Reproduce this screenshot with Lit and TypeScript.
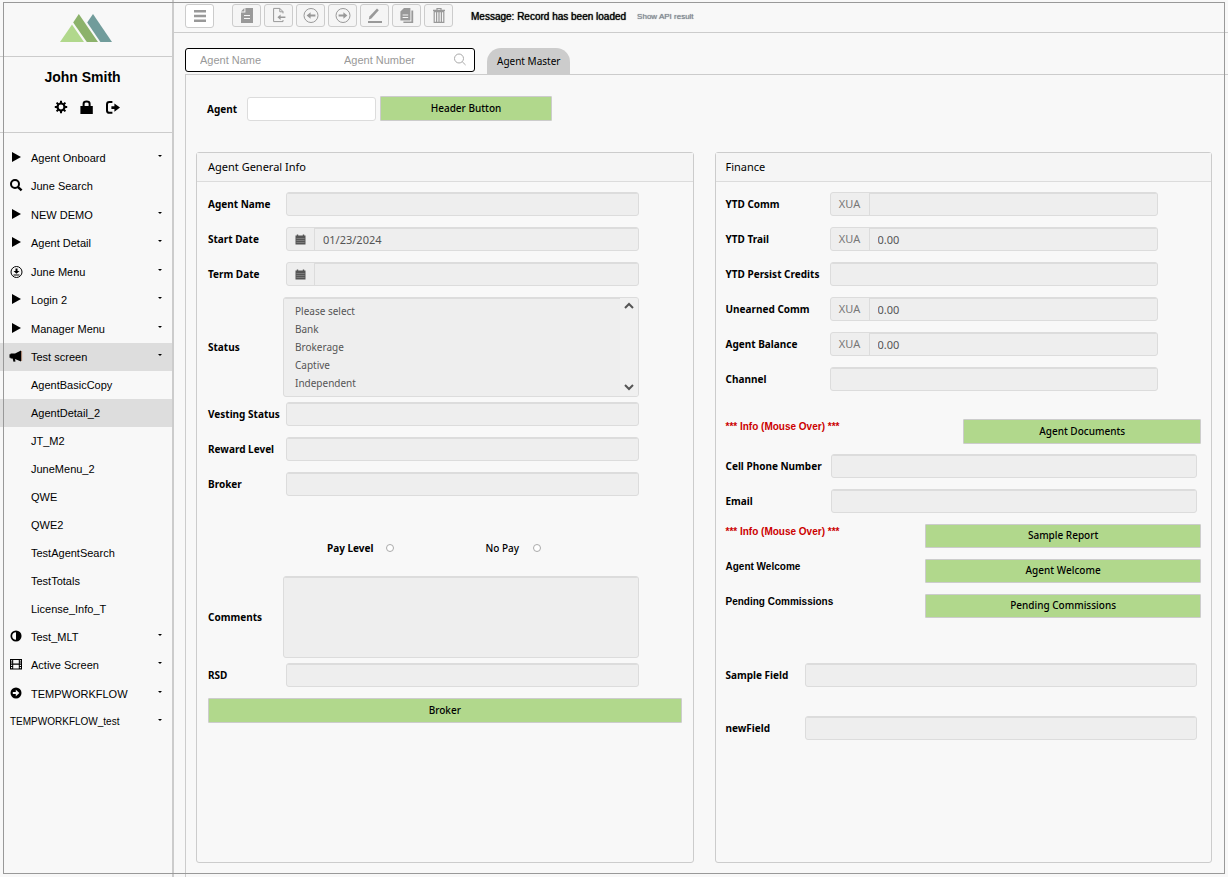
import { LitElement, html, css, svg, nothing } from "lit";
import { customElement, property } from "lit/decorators.js";
import { classMap } from "lit/directives/class-map.js";

/* ---------- icons ---------- */

const glyphs: Record<string, unknown> = {
  play: svg`<path d="M2 2 L11 7 L2 12 Z"/>`,
  search: svg`<circle cx="5" cy="6" r="4" fill="none" stroke="currentColor" stroke-width="2"/><path d="M7.8 8.8 L11.6 12.4" stroke="currentColor" stroke-width="2.4"/>`,
  download: svg`<circle cx="6.5" cy="8" r="5.5" fill="none" stroke="currentColor" stroke-width="1"/><path d="M5.5 4.5 H7.5 V7 H9.5 L6.5 9.8 L3.5 7 H5.5 Z M3.5 10.4 H9.5 V11.4 H3.5 Z"/>`,
  horn: svg`<path d="M11 1.4 V12.4 L5 10 L5.5 12.4 L3.5 12.8 L2.6 9.4 H.6 V8.8 H-.5 V5.2 H.6 V4.6 H5 Z"/><path d="M11.6 2 V12" stroke="#7d3c1c" stroke-width="1" opacity=".6"/>`,
  contrast: svg`<circle cx="6" cy="7" r="4.7" fill="none" stroke="currentColor" stroke-width="1.7"/><path d="M6 2.3 A4.7 4.7 0 0 1 6 11.7 Z"/>`,
  film: svg`<path fill-rule="evenodd" d="M0 2 H12 V12.4 H0 Z M3.2 3 V6.6 H8.8 V3 Z M3.2 7.8 V11.4 H8.8 V7.8 Z M1 3.2 V4.6 H2.2 V3.2 Z M1 5.4 V6.6 H2.2 V5.4 Z M1 7.8 V9 H2.2 V7.8 Z M1 9.9 V11.2 H2.2 V9.9 Z M9.8 3.2 V4.6 H11 V3.2 Z M9.8 5.4 V6.6 H11 V5.4 Z M9.8 7.8 V9 H11 V7.8 Z M9.8 9.9 V11.2 H11 V9.9 Z"/>`,
  arrow: svg`<circle cx="6" cy="7" r="5.5"/><path d="M2.8 6.1 H5.8 V3.8 L9.4 7 L5.8 10.2 V7.9 H2.8 Z" fill="#f8f8f8"/>`,
  gear: svg`<circle cx="7" cy="7" r="3.5" fill="none" stroke="currentColor" stroke-width="2.2"/><path d="M7 .8 V3 M7 11 V13.2 M.8 7 H3 M11 7 H13.2 M2.6 2.6 L4.2 4.2 M9.8 9.8 L11.4 11.4 M2.6 11.4 L4.2 9.8 M9.8 4.2 L11.4 2.6" stroke="currentColor" stroke-width="2"/>`,
  lock: svg`<path d="M.4 6 H12.8 V14 H.4 Z"/><path d="M3.6 6.4 V3.8 Q3.6 1.6 6.6 1.6 Q9.6 1.6 9.6 3.8 V6.4" fill="none" stroke="currentColor" stroke-width="2"/>`,
  logout: svg`<path d="M6.4 2 H3.4 Q1 2 1 4.4 V10.4 Q1 12.8 3.4 12.8 H6.4" fill="none" stroke="currentColor" stroke-width="2"/><path d="M5.4 6.2 H8.4 V3.4 L14 7.6 L8.4 11.8 V9 H5.4 Z"/>`,
};

const tools: { id: string; label: string; art: unknown }[] = [
  {
    id: "new",
    label: "New",
    art: svg`<path fill-rule="evenodd" d="M6.4 1 H14 V16 H2 V5.4 H6.4 Z M5 8 V9 H11 V8 Z M5 11 V12 H11 V11 Z"/><path d="M2 4.4 L5.4 1 V4.4 Z"/>`,
  },
  {
    id: "import",
    label: "Import",
    art: svg`<path d="M12 6.4 V4.6 L8.8 1.4 H2.6 V14.6 H12 V13 M8.8 1.4 V4.8 H12" fill="none" stroke="currentColor"/><path d="M6.4 10.2 L9.6 7.4 V9.4 H14.4 V11 H9.6 V13 Z"/>`,
  },
  {
    id: "prev",
    label: "Previous",
    art: svg`<circle cx="8" cy="8.5" r="7" fill="none" stroke="currentColor"/><path d="M3.6 8.5 L7.6 5.2 V7.6 H12.4 V9.4 H7.6 V11.8 Z"/>`,
  },
  {
    id: "next",
    label: "Next",
    art: svg`<circle cx="8" cy="8.5" r="7" fill="none" stroke="currentColor"/><path d="M12.4 8.5 L8.4 5.2 V7.6 H3.6 V9.4 H8.4 V11.8 Z"/>`,
  },
  {
    id: "edit",
    label: "Edit",
    art: svg`<path d="M1 14 H15 V16 H1 Z"/><path d="M1.8 12.4 L2.4 9.6 L10 1.6 L11.8 3.2 L4.4 11.4 Z"/>`,
  },
  {
    id: "copy",
    label: "Copy",
    art: svg`<path fill-rule="evenodd" d="M5 1 H11.4 V13.4 H1.4 V4.6 Z M3.6 7.6 V8.6 H9.2 V7.6 Z M3.6 10 V11 H9.2 V10 Z"/><path d="M12.4 3.4 H14.2 V16 H4.4 V14.6 H12.4 Z"/>`,
  },
  {
    id: "delete",
    label: "Delete",
    art: svg`<path d="M3.2 4.6 H12.8 V15.4 H3.2 Z M5.6 5 V15 M8 5 V15 M10.4 5 V15 M2 3.4 H14 M6 3 V1.5 H10 V3" fill="none" stroke="currentColor" stroke-width="1.2"/>`,
  },
];

const fieldIcon = svg`<path fill-rule="evenodd" d="M.5 1.6 H1.8 V.4 H3.2 V1.6 H7.8 V.4 H9.2 V1.6 H10.5 V10.6 H.5 Z M1.4 4.4 H9.6 V4.8 H1.4 Z M1.4 6.4 H9.6 V6.8 H1.4 Z M1.4 8.4 H9.6 V8.8 H1.4 Z"/>`;

/* ---------- data ---------- */

interface MenuEntry {
  text: string;
  icon?: string;
  caret?: boolean;
  children?: string[];
}

const menu: MenuEntry[] = [
  { text: "Agent Onboard", icon: "play", caret: true },
  { text: "June Search", icon: "search" },
  { text: "NEW DEMO", icon: "play", caret: true },
  { text: "Agent Detail", icon: "play", caret: true },
  { text: "June Menu", icon: "download", caret: true },
  { text: "Login 2", icon: "play", caret: true },
  { text: "Manager Menu", icon: "play", caret: true },
  {
    text: "Test screen",
    icon: "horn",
    caret: true,
    children: [
      "AgentBasicCopy",
      "AgentDetail_2",
      "JT_M2",
      "JuneMenu_2",
      "QWE",
      "QWE2",
      "TestAgentSearch",
      "TestTotals",
      "License_Info_T",
    ],
  },
  { text: "Test_MLT", icon: "contrast", caret: true },
  { text: "Active Screen", icon: "film", caret: true },
  { text: "TEMPWORKFLOW", icon: "arrow", caret: true },
  { text: "TEMPWORKFLOW_test", caret: true },
];

/* ---------- sidebar ---------- */

@customElement("side-nav")
class SideNav extends LitElement {
  static styles = css`
    :host {
      display: block;
      width: 172px;
      flex: none;
      border-right: 2px solid #ccc;
      font-family: "Liberation Sans", Arial, sans-serif;
      color: #000;
    }
    .brand {
      display: flex;
      justify-content: center;
      height: 56px;
      box-sizing: border-box;
      padding-top: 14px;
    }
    .user {
      display: flex;
      flex-direction: column;
      align-items: center;
      box-sizing: border-box;
      height: 77px;
      padding: 10px 0 0 2px;
      border-top: 1px solid #ccc;
      border-bottom: 1px solid #ccc;
    }
    .name {
      margin: 0;
      padding-right: 9px;
      font-size: 14px;
      line-height: 20px;
      font-weight: 700;
    }
    .actions {
      display: flex;
      gap: 11px;
      margin-top: 13px;
    }
    .action {
      display: block;
      width: 15px;
      height: 15px;
      padding: 0;
      border: 0;
      background: none;
      color: inherit;
    }
    svg {
      display: block;
      fill: currentColor;
      overflow: visible;
    }
    ul {
      list-style: none;
      margin: 0;
      padding: 0;
    }
    .menu {
      padding-top: 11px;
    }
    .entry:nth-child(even):not(.open) {
      margin-bottom: 1px;
    }
    .link {
      display: flex;
      align-items: center;
      height: 28px;
      padding: 0 10px;
      font-size: 11px;
      line-height: 28px;
      color: inherit;
      text-decoration: none;
    }
    .icon {
      width: 14px;
      height: 16px;
      margin-right: 7px;
    }
    .plain {
      font-size: 10px;
    }
    .text {
      flex: 1;
    }
    .caret {
      width: 4px;
      height: 2px;
      margin-bottom: 4px;
    }
    .child {
      padding-left: 31px;
    }
    .active {
      background: #ddd;
    }
  `;

  render() {
    return html`
      <div class="brand">
        <svg width="52" height="28" viewBox="0 0 52 28" role="img" aria-label="Logo">
          <path d="M0 28 L12 10.5 L24 28 Z" fill="#b1d88c" />
          <path d="M13.2 8.4 L18.8 0 L38 28 H26.8 Z" fill="#8cb26b" />
          <path d="M27.2 8.4 L33 0 L52 28 H40.4 Z" fill="#719c9b" />
        </svg>
      </div>
      <div class="user">
        <h2 class="name">John Smith</h2>
        <div class="actions">
          ${["gear", "lock", "logout"].map(
            (n) => html`<button class="action" aria-label=${n}>
              <svg width="15" height="15" viewBox="0 0 15 15">${glyphs[n]}</svg>
            </button>`
          )}
        </div>
      </div>
      <nav>
        <ul class="menu">
          ${menu.map((m) => {
            const open = !!m.children;
            return html`<li class=${classMap({ entry: true, open })}>
              <a href="#" class=${classMap({ link: true, active: open, plain: !m.icon })}>
                ${m.icon
                  ? html`<svg class="icon" viewBox="0 0 14 16">${glyphs[m.icon]}</svg>`
                  : nothing}
                <span class="text">${m.text}</span>
                ${m.caret
                  ? html`<svg class="caret" viewBox="0 0 4 2"><path d="M0 0 H4 L2 2 Z" /></svg>`
                  : nothing}
              </a>
              ${open
                ? html`<ul>
                    ${m.children!.map(
                      (c) => html`<li>
                        <a
                          href="#"
                          class=${classMap({ link: true, child: true, active: c === "AgentDetail_2" })}
                          >${c}</a
                        >
                      </li>`
                    )}
                  </ul>`
                : nothing}
            </li>`;
          })}
        </ul>
      </nav>
    `;
  }
}

/* ---------- labelled field ---------- */

@customElement("form-field")
class FormField extends LitElement {
  @property() label = "";
  @property() value = "";
  @property() addon = "";
  @property() kind = "text";

  static styles = css`
    :host {
      display: grid;
      grid-template-columns: var(--label-width, 78px) minmax(0, 1fr);
      align-items: center;
      margin-bottom: 11px;
      font-family: "Noto Sans", "Open Sans", sans-serif;
    }
    :host([kind="list"]),
    :host([kind="area"]) {
      margin-bottom: 5px;
    }
    label {
      font-size: 10px;
      line-height: 16px;
      font-weight: 700;
      white-space: nowrap;
    }
    .group {
      display: flex;
      box-sizing: border-box;
      height: 24px;
      border: 1px solid #dcdcdc;
      border-radius: 3px;
      background: #eee;
      overflow: hidden;
    }
    .addon {
      display: flex;
      align-items: center;
      justify-content: center;
      border-right: 1px solid #dcdcdc;
      font-size: 11px;
      line-height: 20px;
      color: #777;
    }
    .date {
      width: 27px;
      color: #555;
    }
    .money {
      width: 38px;
    }
    input,
    select,
    textarea {
      box-sizing: border-box;
      margin: 0;
      border: 0;
      outline: 0;
      border-radius: 0;
      background: none;
      color: #555;
      font-family: inherit;
      font-size: 11px;
      box-shadow: inset 0 1px 0 #dcdcdc;
    }
    input {
      flex: 1;
      min-width: 0;
      padding: 0 8px;
    }
    .wide {
      position: relative;
      height: auto;
      margin-left: -3px;
    }
    select {
      width: 100%;
      height: 98px;
      padding: 6px 0 0 11px;
      overflow: hidden;
      font-size: 10px;
    }
    option {
      box-sizing: border-box;
      height: 18px;
      min-height: 18px;
      padding: 0;
      line-height: 18px;
    }
    textarea {
      display: block;
      width: 100%;
      height: 80px;
      resize: none;
      padding: 8px;
    }
    .scroll {
      position: absolute;
      top: 0;
      right: 0;
      bottom: 0;
      display: flex;
      flex-direction: column;
      justify-content: space-between;
      align-items: center;
      width: 18px;
      padding: 4px 0 5px;
      box-sizing: border-box;
      background: #f0f0f0;
    }
    svg {
      display: block;
    }
  `;

  private control() {
    if (this.kind === "list") {
      return html`<div class="group wide">
        <select id="f" size="5">
          ${["Please select", "Bank", "Brokerage", "Captive", "Independent"].map(
            (o) => html`<option>${o}</option>`
          )}
        </select>
        <div class="scroll" aria-hidden="true">
          <svg width="10" height="7" viewBox="0 0 10 7">
            <path d="M1 6 L5 2 L9 6" fill="none" stroke="#555" stroke-width="2" />
          </svg>
          <svg width="10" height="7" viewBox="0 0 10 7">
            <path d="M1 1 L5 5 L9 1" fill="none" stroke="#555" stroke-width="2" />
          </svg>
        </div>
      </div>`;
    }
    if (this.kind === "area") {
      return html`<div class="group wide"><textarea id="f" readonly></textarea></div>`;
    }
    return html`<div class="group">
      ${this.kind === "date"
        ? html`<span class="addon date"
            ><svg width="11" height="11" viewBox="0 0 11 11" fill="currentColor">${fieldIcon}</svg></span
          >`
        : nothing}
      ${this.addon ? html`<span class="addon money">${this.addon}</span>` : nothing}
      <input id="f" type="text" readonly .value=${this.value} />
    </div>`;
  }

  render() {
    return html`<label for="f">${this.label}</label>${this.control()}`;
  }
}

/* ---------- page ---------- */

@customElement("app-root")
class AppRoot extends LitElement {
  static styles = css`
    :host {
      display: flex;
      position: relative;
      min-height: 100vh;
      background: #f8f8f8;
      color: #000;
      font-family: "Noto Sans", "Open Sans", sans-serif;
      font-size: 10px;
    }
    .frame {
      position: absolute;
      inset: 2px 3px 3px;
      border: 1px solid #999;
      pointer-events: none;
    }
    .main {
      display: flex;
      flex-direction: column;
      flex: 1;
      min-width: 0;
    }
    button {
      font-family: inherit;
      color: inherit;
    }
    svg {
      display: block;
    }
    .toolbar {
      display: flex;
      align-items: center;
      box-sizing: border-box;
      height: 33px;
      padding: 0 11px 1px;
      border-bottom: 1px solid #ccc;
      font-family: "Liberation Sans", Arial, sans-serif;
    }
    .tool {
      display: flex;
      align-items: center;
      justify-content: center;
      box-sizing: border-box;
      width: 29px;
      height: 23px;
      padding: 0;
      border: 1px solid #ccc;
      border-radius: 3px;
      background: #f5f5f5;
      color: #999;
    }
    .tool svg {
      fill: currentColor;
    }
    .toggle {
      height: 24px;
      background: #fff;
    }
    .tools {
      display: flex;
      gap: 3px;
      margin-left: 18px;
    }
    .message {
      margin: 2px 11px 0 18px;
      font-size: 10px;
      line-height: 14px;
      text-shadow: 0 0 1px #000;
    }
    .api {
      margin-top: 2px;
      font-size: 8px;
      line-height: 14px;
      color: #808890;
      text-decoration: none;
      text-shadow: 0 0 1px #808890;
    }
    .tabs {
      display: flex;
      gap: 12px;
      padding: 15px 11px 0;
    }
    .search {
      display: grid;
      grid-template-columns: 144px 1fr 14px;
      align-items: center;
      box-sizing: border-box;
      width: 290px;
      height: 24px;
      padding: 0 7px 0 14px;
      border: 1px solid #000;
      border-radius: 3px;
      background: #fff;
    }
    .search input {
      min-width: 0;
      padding: 0;
      border: 0;
      outline: 0;
      background: none;
      font-family: "Liberation Sans", Arial, sans-serif;
      font-size: 11px;
    }
    .search input::placeholder {
      color: #999;
      opacity: 1;
    }
    .tab {
      height: 26px;
      padding: 0 10px;
      border: 0;
      border-radius: 14px 14px 0 0;
      background: #ccc;
      font-size: 10px;
    }
    .content {
      display: flex;
      flex-direction: column;
      flex: 1;
      margin-left: 11px;
      padding: 21px 16px 14px 10px;
      border-top: 1px solid #ccc;
      border-left: 1px solid #ccc;
    }
    .head {
      display: flex;
      align-items: center;
      gap: 4px;
      margin-bottom: 31px;
      padding-left: 11px;
    }
    .head label {
      width: 36px;
      font-weight: 700;
    }
    .head input {
      box-sizing: border-box;
      width: 129px;
      height: 24px;
      padding: 0 8px;
      border: 1px solid #dcdcdc;
      border-radius: 3px;
      background: #fff;
    }
    .btn {
      box-sizing: border-box;
      height: 25px;
      padding: 0 8px 2px;
      border: 1px solid #ccc;
      border-radius: 1px;
      background: #b1d88c;
      font-size: 10px;
      font-weight: 500;
    }
    .header-btn {
      width: 172px;
    }
    .panels {
      display: grid;
      grid-template-columns: 1fr 1fr;
      gap: 21px;
      flex: 1;
    }
    .panel {
      min-width: 0;
      border: 1px solid #ccc;
      border-radius: 3px;
    }
    .title {
      margin: 0;
      padding: 0 11px;
      height: 28px;
      border-bottom: 1px solid #dcdcdc;
      background: #f5f5f5;
      font-size: 11px;
      line-height: 28px;
      font-weight: 400;
    }
    .finance .title {
      padding-left: 10px;
    }
    .body {
      padding: 10px 11px;
    }
    .finance .body {
      padding: 10px;
    }
    .fields {
      padding-right: 43px;
    }
    .finance .fields {
      --label-width: 104px;
      padding-bottom: 17px;
    }
    .contact {
      --label-width: 105px;
      padding-right: 4px;
    }
    .extra {
      --label-width: 79px;
      padding: 34px 4px 0 0;
    }
    .extra form-field + form-field {
      margin-top: 29px;
    }
    .radios {
      display: flex;
      gap: 92px;
      padding: 29px 0 16px 119px;
    }
    .radio {
      display: flex;
      align-items: center;
      gap: 12px;
      height: 24px;
      font-weight: 700;
    }
    .light {
      gap: 14px;
      font-weight: 500;
    }
    .radio input {
      appearance: none;
      width: 8px;
      height: 8px;
      margin: 0;
      border: 1px solid #aaa;
      border-radius: 50%;
      background: #fff;
    }
    .block {
      display: block;
      width: 100%;
    }
    .line {
      display: flex;
      justify-content: space-between;
      align-items: flex-start;
      min-height: 25px;
      margin-bottom: 10px;
      font-family: "Liberation Sans", Arial, sans-serif;
      font-weight: 700;
      line-height: 15px;
    }
    .line .btn {
      width: 58%;
      height: 24px;
      font-family: "Noto Sans", "Open Sans", sans-serif;
    }
    .line .narrow {
      width: 50%;
      height: 25px;
    }
    .info {
      color: #c00;
    }
  `;

  private line(text: string, button: string, info = false, narrow = false) {
    return html`<div class="line">
      <span class=${classMap({ info })}>${text}</span>
      <button class=${classMap({ btn: true, narrow })}>${button}</button>
    </div>`;
  }

  render() {
    return html`
      <side-nav></side-nav>
      <main class="main">
        <header class="toolbar">
          <button class="tool toggle" aria-label="Menu">
            <svg width="12" height="12" viewBox="0 0 12 12">
              <path d="M0 0 H12 V2.4 H0 Z M0 4.8 H12 V7.2 H0 Z M0 9.6 H12 V12 H0 Z" />
            </svg>
          </button>
          <div class="tools">
            ${tools.map(
              (t) => html`<button class="tool" aria-label=${t.label}>
                <svg width="16" height="17" viewBox="0 0 16 17">${t.art}</svg>
              </button>`
            )}
          </div>
          <span class="message">Message: Record has been loaded</span>
          <a class="api" href="#">Show API result</a>
        </header>
        <div class="tabs">
          <form class="search" role="search">
            <input type="text" placeholder="Agent Name" aria-label="Agent Name" />
            <input type="text" placeholder="Agent Number" aria-label="Agent Number" />
            <svg width="14" height="14" viewBox="0 0 14 14" fill="none" stroke="#aaa">
              <circle cx="6" cy="5.5" r="4.5" />
              <path d="M9.2 8.7 L12.6 12" />
            </svg>
          </form>
          <button class="tab">Agent Master</button>
        </div>
        <div class="content">
          <div class="head">
            <label for="agent">Agent</label>
            <input id="agent" type="text" />
            <button class="btn header-btn">Header Button</button>
          </div>
          <div class="panels">
            <section class="panel">
              <h3 class="title">Agent General Info</h3>
              <div class="body">
                <div class="fields">
                  <form-field label="Agent Name"></form-field>
                  <form-field label="Start Date" kind="date" value="01/23/2024"></form-field>
                  <form-field label="Term Date" kind="date"></form-field>
                  <form-field label="Status" kind="list"></form-field>
                  <form-field label="Vesting Status"></form-field>
                  <form-field label="Reward Level"></form-field>
                  <form-field label="Broker"></form-field>
                  <div class="radios">
                    <label class="radio">Pay Level <input type="radio" name="pay" /></label>
                    <label class="radio light">No Pay <input type="radio" name="pay" /></label>
                  </div>
                  <form-field label="Comments" kind="area"></form-field>
                  <form-field label="RSD"></form-field>
                </div>
                <button class="btn block">Broker</button>
              </div>
            </section>
            <section class="panel finance">
              <h3 class="title">Finance</h3>
              <div class="body">
                <div class="fields">
                  <form-field label="YTD Comm" addon="XUA"></form-field>
                  <form-field label="YTD Trail" addon="XUA" value="0.00"></form-field>
                  <form-field label="YTD Persist Credits"></form-field>
                  <form-field label="Unearned Comm" addon="XUA" value="0.00"></form-field>
                  <form-field label="Agent Balance" addon="XUA" value="0.00"></form-field>
                  <form-field label="Channel"></form-field>
                </div>
                ${this.line("*** Info (Mouse Over) ***", "Agent Documents", true, true)}
                <div class="contact">
                  <form-field label="Cell Phone Number"></form-field>
                  <form-field label="Email"></form-field>
                </div>
                ${this.line("*** Info (Mouse Over) ***", "Sample Report", true)}
                ${this.line("Agent Welcome", "Agent Welcome")}
                ${this.line("Pending Commissions", "Pending Commissions")}
                <div class="extra">
                  <form-field label="Sample Field"></form-field>
                  <form-field label="newField"></form-field>
                </div>
              </div>
            </section>
          </div>
        </div>
      </main>
      <div class="frame"></div>
    `;
  }
}
